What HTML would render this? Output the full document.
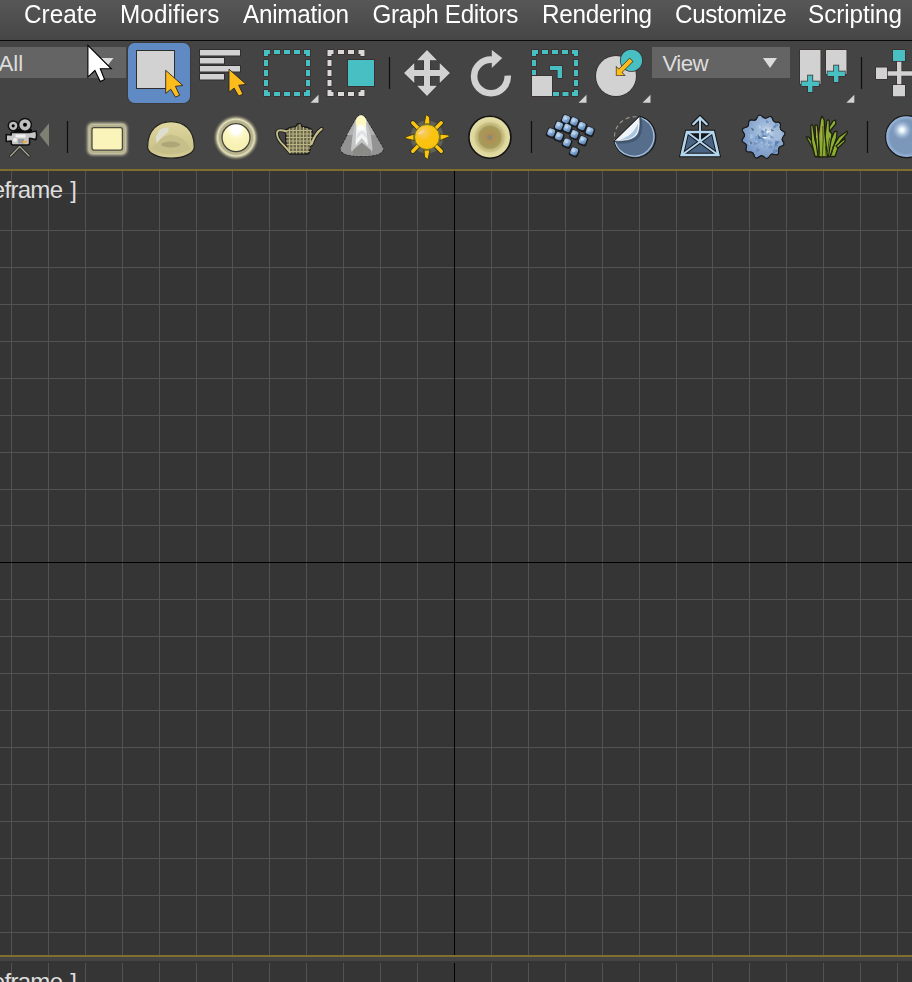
<!DOCTYPE html>
<html>
<head>
<meta charset="utf-8">
<title>Viewport</title>
<style>
html,body{margin:0;padding:0;}
body{width:912px;height:982px;overflow:hidden;background:#444444;position:relative;font-family:"Liberation Sans",sans-serif;}
.abs{position:absolute;}
#menubar{left:0;top:0;width:912px;height:40px;background:linear-gradient(#575757,#464646);}
#menuline{left:0;top:40px;width:912px;height:1px;background:#0a0a0a;}
.mi{position:absolute;top:0;height:40px;line-height:30px;font-size:24.3px;color:#ffffff;white-space:nowrap;transform:scaleY(1.035);transform-origin:0 22.6px;}
.dd{position:absolute;top:47px;height:31px;background:#646464;color:#dcdcdc;font-size:22.3px;line-height:33px;white-space:nowrap;}
.sep{position:absolute;width:2px;background:#1e1e1e;}
.vplabel{position:absolute;font-size:24px;line-height:28px;letter-spacing:-0.7px;color:#dedede;white-space:nowrap;}
svg{position:absolute;left:0;top:0;overflow:visible;}
</style>
</head>
<body>
<!-- MENU BAR -->
<div id="menubar" class="abs">
  <span class="mi" style="left:24px">Create</span>
  <span class="mi" style="left:120px;letter-spacing:0.1px">Modifiers</span>
  <span class="mi" style="left:243px;letter-spacing:-0.25px">Animation</span>
  <span class="mi" style="left:372.5px;letter-spacing:-0.33px">Graph Editors</span>
  <span class="mi" style="left:542px;letter-spacing:-0.25px">Rendering</span>
  <span class="mi" style="left:675px;letter-spacing:-0.37px">Customize</span>
  <span class="mi" style="left:808px;letter-spacing:-0.06px">Scripting</span>
</div>
<div id="menuline" class="abs"></div>

<!-- DROPDOWNS -->
<div class="dd" style="left:0;width:126px;"><span style="position:absolute;left:-1.5px;letter-spacing:0px">All</span></div>
<div class="dd" style="left:652px;width:138px;"><span style="position:absolute;left:10.5px;letter-spacing:-0.6px">View</span></div>

<!-- VIEWPORTS -->
<div class="abs" id="vp1" style="left:0;top:169px;width:912px;height:788px;background:#353535;"></div>
<div class="abs" id="vp2" style="left:0;top:961px;width:912px;height:21px;background:#353535;"></div>

<!-- MAIN SVG LAYER -->
<svg id="main" width="912" height="982" viewBox="0 0 912 982">
<!--GRID-->
<g shape-rendering="crispEdges">
<path fill="#525252" d="M11 171h1v784h-1zM48 171h1v784h-1zM85 171h1v784h-1zM122 171h1v784h-1zM159 171h1v784h-1zM196 171h1v784h-1zM232 171h1v784h-1zM269 171h1v784h-1zM306 171h1v784h-1zM343 171h1v784h-1zM380 171h1v784h-1zM417 171h1v784h-1zM491 171h1v784h-1zM528 171h1v784h-1zM565 171h1v784h-1zM602 171h1v784h-1zM639 171h1v784h-1zM676 171h1v784h-1zM712 171h1v784h-1zM749 171h1v784h-1zM786 171h1v784h-1zM823 171h1v784h-1zM860 171h1v784h-1zM897 171h1v784h-1zM0 193h912v1h-912zM0 230h912v1h-912zM0 267h912v1h-912zM0 304h912v1h-912zM0 341h912v1h-912zM0 378h912v1h-912zM0 415h912v1h-912zM0 452h912v1h-912zM0 489h912v1h-912zM0 525h912v1h-912zM0 599h912v1h-912zM0 636h912v1h-912zM0 673h912v1h-912zM0 710h912v1h-912zM0 747h912v1h-912zM0 784h912v1h-912zM0 821h912v1h-912zM0 858h912v1h-912zM0 895h912v1h-912zM0 932h912v1h-912z"/>
<path fill="#525252" d="M11 963h1v19h-1zM48 963h1v19h-1zM85 963h1v19h-1zM122 963h1v19h-1zM159 963h1v19h-1zM196 963h1v19h-1zM232 963h1v19h-1zM269 963h1v19h-1zM306 963h1v19h-1zM343 963h1v19h-1zM380 963h1v19h-1zM417 963h1v19h-1zM491 963h1v19h-1zM528 963h1v19h-1zM565 963h1v19h-1zM602 963h1v19h-1zM639 963h1v19h-1zM676 963h1v19h-1zM712 963h1v19h-1zM749 963h1v19h-1zM786 963h1v19h-1zM823 963h1v19h-1zM860 963h1v19h-1zM897 963h1v19h-1z"/>
<rect x="454" y="171" width="1" height="784" fill="#000"/>
<rect x="0" y="562" width="912" height="1" fill="#000"/>
<rect x="454" y="963" width="1" height="19" fill="#000"/>
<rect x="0" y="169" width="912" height="2" fill="#826e2c"/>
<rect x="0" y="955" width="912" height="2" fill="#826e2c"/>
</g>
<!--/GRID-->
<!--ICONS-->
<g id="row1">
<!-- selected button -->
<rect x="128" y="43" width="62" height="60" rx="6.500" fill="#5f8ac3" stroke="#3c3a38" stroke-width="1.600" paint-order="stroke"/>
<rect x="136.5" y="50.5" width="38" height="38" fill="#d2d2d2" stroke="#2e2e2e" stroke-width="1"/>
<path id="cur" d="M165.7 70.3 v23.1 l5.1 -4.2 l4.6 7.9 l4.2 -1.8 l-4.2 -9 l7.5 -0.8 z" fill="#fcbc1c" stroke="#2a2622" stroke-width="0.9" stroke-linejoin="miter"/>
<!-- select by name -->
<g fill="#d2d2d2" stroke="#2e2e2e" stroke-width="1">
<rect x="199.5" y="49.5" width="41" height="6.5"/>
<rect x="199.5" y="57.5" width="25" height="6.5"/>
<rect x="199.5" y="65.5" width="41" height="6.5"/>
<rect x="199.5" y="73.5" width="25" height="6.5"/>
</g>
<path d="M229 69.2 v23.1 l5.1 -4.2 l4.6 7.9 l4.2 -1.8 l-4.2 -9 l7.5 -0.8 z" fill="#fcbc1c" stroke="#2a2622" stroke-width="0.9"/>
<!-- rectangular selection region -->
<g fill="#47bfc3" stroke="#3a2e2e" stroke-width="1.5" paint-order="stroke">
<path d="M264 50h6v4h-2v2h-4z M310 50h-6v4h2v2h4z M264 96h6v-4h-2v-2h-4z M310 96h-6v-4h2v-2h4z"/>
<path d="M274 50h6v4h-6z M284 50h6v4h-6z M294 50h6v4h-6z M274 92h6v4h-6z M284 92h6v4h-6z M294 92h6v4h-6z"/>
<path d="M264 60h4v6h-4z M264 70h4v6h-4z M264 80h4v6h-4z M306 60h4v6h-4z M306 70h4v6h-4z M306 80h4v6h-4z"/>
</g>
<path d="M318.5 94.8v8h-8z" fill="#d2d2d2"/>
<!-- window/crossing -->
<g fill="#dadada" stroke="#3a2e2e" stroke-width="1.5" paint-order="stroke">
<path d="M327.5 50h6v4h-2v2h-4z M364.5 50h-6v4h2v2h4z M327.5 96h6v-4h-2v-2h-4z M364.5 96h-6v-4h2v-2h4z"/>
<path d="M338 50h6v4h-6z M348 50h6v4h-6z M338 92h6v4h-6z M348 92h6v4h-6z"/>
<path d="M327.5 60h4v6h-4z M327.5 70h4v6h-4z M327.5 80h4v6h-4z"/>
</g>
<rect x="347.5" y="59.5" width="27" height="27" fill="#47bfc3" stroke="#3a3030" stroke-width="1"/>
<!-- separator -->
<rect x="388.9" y="57" width="1.200" height="32" fill="#0e0e0e"/>
<!-- move -->
<path fill="#d2d2d2" stroke="#353535" stroke-width="1.200" paint-order="stroke" d="M427 50 l10 10.3 h-7 v9.7 h9.700 v-7 l10.300 10 l-10.300 10 v-7 h-9.700 v9.700 h7 l-10 10.300 l-10 -10.300 h7 v-9.700 h-9.700 v7 l-10.300 -10 l10.300 -10 v7 h9.700 v-9.700 h-7 z"/>
<!-- rotate -->
<path fill="none" stroke="#d2d2d2" stroke-width="6.6" d="M492.5 59.700 A16.800 16.800 0 1 0 507.700 75.600"/>
<path fill="#d2d2d2" d="M491.800 50 L502.200 58 L491.800 68z"/>
<!-- scale -->
<g fill="#47bfc3" stroke="#3a2e2e" stroke-width="1.5" paint-order="stroke">
<path d="M532 50h6v4h-2v2h-4z M578 50h-6v4h2v2h4z M578 96h-6v-4h2v-2h4z"/>
<path d="M542 50h6v4h-6z M552 50h6v4h-6z M562 50h6v4h-6z M553 92h6v4h-6z M562.500 92h6v4h-6z"/>
<path d="M532 60h4v6h-4z M532 70h4v5h-4z M574 60h4v6h-4z M574 70h4v6h-4z M574 80h4v6h-4z"/>
<path d="M550 66h12v12h-4.400v-8h-7.600z"/>
</g>
<rect x="532" y="76" width="20" height="20" fill="#d2d2d2" stroke="#3a2e2e" stroke-width="1.5" paint-order="stroke"/>
<path d="M586.500 94.800v8h-8z" fill="#d2d2d2"/>
<!-- place highlight -->
<circle cx="616" cy="76" r="20" fill="#d2d2d2" stroke="#3a2e2e" stroke-width="1.5" paint-order="stroke"/>
<circle cx="631.400" cy="60.400" r="10.700" fill="#47bfc3" stroke="#3a2e2e" stroke-width="1.5" paint-order="stroke"/>
<path d="M629.700 58.600 L632.500 61.500 L621.600 72.400 L624.200 75.100 L616.500 75.200 L616.500 67.300 L618.800 69.600 Z" fill="#fcbc1c" stroke="#2e2a22" stroke-width="1.300" paint-order="stroke" stroke-linejoin="miter"/>
<path d="M650.500 94.800v8h-8z" fill="#d2d2d2"/>
<!-- dropdown arrows -->
<path d="M100 58h13.500l-6.750 8.500z" fill="#dcdcdc"/>
<path d="M763 58h14l-7 10z" fill="#dcdcdc"/>
<!-- pivot -->
<g fill="#d2d2d2" stroke="#3a2e2e" stroke-width="1.5" paint-order="stroke">
<rect x="800" y="50" width="20.500" height="34"/>
<rect x="826" y="50" width="20.500" height="24"/>
</g>
<g fill="#47bfc3" stroke="#3a2e2e" stroke-width="1.5" paint-order="stroke">
<path d="M808 75.600h4.400v6h6.500v4.400h-6.500v6h-4.400v-6h-6.500v-4.400h6.500z"/>
<path d="M834 65.600h4.400v6h6.500v4.400h-6.500v6h-4.400v-6h-6.500v-4.400h6.500z"/>
</g>
<path d="M854.300 94.800v8h-8z" fill="#d2d2d2"/>
<rect x="860.9" y="57" width="1.200" height="32" fill="#0e0e0e"/>
<!-- link -->
<g stroke="#3a2e2e" stroke-width="1.5" paint-order="stroke">
<path fill="#d2d2d2" d="M897 61h4.400v10.300h10.600v4.400h-10.600v9.300h-4.400v-9.300h-10.400v-4.400h10.400z"/>
<rect x="876" y="67.500" width="11" height="11.500" fill="#d2d2d2"/>
<rect x="893" y="85" width="12" height="11.300" fill="#d2d2d2"/>
<rect x="893" y="50" width="12" height="11" fill="#47bfc3"/>
</g>
</g>
<defs>
<filter id="blur3" x="-50%" y="-50%" width="200%" height="200%"><feGaussianBlur stdDeviation="2.2"/></filter>
<filter id="blur2" x="-50%" y="-50%" width="200%" height="200%"><feGaussianBlur stdDeviation="1.7"/></filter>
<filter id="blur1" x="-50%" y="-50%" width="200%" height="200%"><feGaussianBlur stdDeviation="0.7"/></filter>
<radialGradient id="gGlow" cx="0.5" cy="0.5" r="0.5"><stop offset="0.6" stop-color="#b3af88"/><stop offset="0.73" stop-color="#b9b58e"/><stop offset="0.8" stop-color="#e6e3c0"/><stop offset="0.85" stop-color="#c4c19c" stop-opacity="0.85"/><stop offset="0.93" stop-color="#8f8d74" stop-opacity="0.4"/><stop offset="1" stop-color="#6a6958" stop-opacity="0"/></radialGradient>
<radialGradient id="gSphL" cx="0.5" cy="0.2" r="0.6"><stop offset="0" stop-color="#ffffff"/><stop offset="0.25" stop-color="#ffffff"/><stop offset="0.55" stop-color="#fcf7c2"/><stop offset="1" stop-color="#f8f1b4"/></radialGradient>
<radialGradient id="gDisc" cx="0.5" cy="0.5" r="0.5"><stop offset="0" stop-color="#8a8a76"/><stop offset="0.11" stop-color="#8a8a76"/><stop offset="0.14" stop-color="#b48c50"/><stop offset="0.23" stop-color="#b18f52"/><stop offset="0.3" stop-color="#a89558"/><stop offset="0.4" stop-color="#a69859"/><stop offset="0.53" stop-color="#a99c5b"/><stop offset="0.58" stop-color="#c0b679"/><stop offset="0.68" stop-color="#c9c084"/><stop offset="0.75" stop-color="#dcd59b"/><stop offset="0.9" stop-color="#e3dca4"/><stop offset="1" stop-color="#dcd498"/></radialGradient>
<radialGradient id="gBlue" cx="0.5" cy="0.5" r="0.5"><stop offset="0" stop-color="#7a96b8"/><stop offset="0.78" stop-color="#7b97ba"/><stop offset="0.93" stop-color="#94b1d6"/><stop offset="1" stop-color="#a2c0e4"/></radialGradient>
<radialGradient id="gHi" cx="0.5" cy="0.5" r="0.5"><stop offset="0" stop-color="#ffffff"/><stop offset="0.18" stop-color="#ecf8fc"/><stop offset="0.45" stop-color="#bcd0e4" stop-opacity="0.9"/><stop offset="0.75" stop-color="#9ab3d2" stop-opacity="0.5"/><stop offset="1" stop-color="#7b97ba" stop-opacity="0"/></radialGradient>
<linearGradient id="gCube" x1="0" y1="0" x2="1" y2="1"><stop offset="0" stop-color="#b2d0ec"/><stop offset="0.5" stop-color="#8cb1d9"/><stop offset="1" stop-color="#4a73a6"/></linearGradient>
<radialGradient id="gSun" cx="0.35" cy="0.3" r="0.7"><stop offset="0" stop-color="#f6cf70"/><stop offset="0.35" stop-color="#f9c632"/><stop offset="0.5" stop-color="#fbc312"/><stop offset="1" stop-color="#fbc10e"/></radialGradient>
<radialGradient id="gCone" cx="0.5" cy="0.18" r="0.4"><stop offset="0" stop-color="#fffbd0"/><stop offset="0.45" stop-color="#fdf8cc"/><stop offset="1" stop-color="#ffffff" stop-opacity="0"/></radialGradient>
<radialGradient id="gBlob" cx="0.58" cy="0.4" r="0.6"><stop offset="0" stop-color="#dde8f3"/><stop offset="0.3" stop-color="#a3bddc"/><stop offset="1" stop-color="#7898c6"/></radialGradient>
<linearGradient id="gDome" x1="0" y1="0" x2="0" y2="1"><stop offset="0" stop-color="#e0d8a2"/><stop offset="0.5" stop-color="#d2c990"/><stop offset="0.8" stop-color="#cbc38a"/><stop offset="1" stop-color="#d9d09a"/></linearGradient>
</defs>
<g id="row2">
<!-- camera -->
<g>
<path d="M39.5 134.700 L49 123.200 V146.800z" fill="#7f7f73"/>
<path d="M19.700 146.500 L10.500 156 M19.700 146.500 L29 156" stroke="#222" stroke-width="3" fill="none" stroke-linecap="round"/>
<path d="M19.700 146.500 L10.500 156 M19.700 146.500 L29 156" stroke="#a4a494" stroke-width="1.400" fill="none" stroke-linecap="round"/>
<path d="M14 129 H32 V134 H14z" fill="#0c0c0c"/>
<path d="M11.200 132.500 H29.600 L36 131 Q37.500 135.300 36 139.600 L29.600 138.300 V143 Q29.600 145 27.600 145 H13.200 Q11.200 145 11.200 143 V141 L6.200 141.500 V134.500 L11.200 135z" fill="#c6c6c6" stroke="#111" stroke-width="1.600" stroke-linejoin="round"/>
<rect x="15.500" y="134.500" width="10" height="3" fill="#f2f2f2"/>
<rect x="18" y="139" width="6" height="4.500" fill="#9a9a9a"/>
<circle cx="15" cy="140" r="2" fill="#eeeeee"/>
<rect x="23" y="140.800" width="3.600" height="2.400" fill="#f2a93a"/>
<circle cx="13.200" cy="125.800" r="4.900" fill="#bebebe" stroke="#111" stroke-width="1.500"/>
<circle cx="13.200" cy="125.800" r="1.600" fill="#000"/>
<circle cx="25" cy="124.800" r="6.400" fill="#bebebe" stroke="#111" stroke-width="1.500"/>
<circle cx="25" cy="124.800" r="2" fill="#000"/>
</g>
<rect x="66.9" y="121" width="1.200" height="32" fill="#0e0e0e"/>
<!-- rect light -->
<rect x="87.500" y="123" width="39.500" height="32" rx="5" fill="#e2dfbb" opacity="0.950" filter="url(#blur2)"/>
<rect x="89.500" y="125" width="35.500" height="28" rx="3" fill="#b5b18a" filter="url(#blur1)"/>
<rect x="92" y="127.700" width="30.400" height="22.400" rx="2" fill="#faf4ba" stroke="#4a4a46" stroke-width="1.300"/>
<!-- dome -->
<path d="M147.600 147 C147.600 130 158 121.600 171 121.600 C184 121.600 194.300 130 194.300 147 C194.300 153 184 158.200 171 158.200 C158 158.200 147.600 153 147.600 147 Z" fill="url(#gDome)" stroke="#222220" stroke-width="1.200"/>
<path d="M152 148 Q160 136 171 134.500 Q183 136 190.500 148 Q182 154.500 171 154.500 Q160 154.500 152 148z" fill="#c7bf8a" filter="url(#blur1)"/>
<ellipse cx="170.600" cy="144.500" rx="9.500" ry="3" fill="#aea678" filter="url(#blur1)"/>
<path d="M155.800 137 L159.700 130 Q163 127.600 168.300 127.600 L168.500 131.700 Q161 137 156.600 143.800z" fill="#deded0" filter="url(#blur1)"/>
<!-- sphere light -->
<circle cx="236" cy="137.600" r="23" fill="url(#gGlow)"/>
<circle cx="236" cy="137.600" r="14" fill="url(#gSphL)" stroke="#454540" stroke-width="1.300"/>
<!-- teapot -->
<g>
<g fill="none" stroke="#171717" stroke-linecap="round">
<path d="M286.500 131.500 Q276.500 128 277 134 Q277.500 139.500 283.500 145 Q287 148.500 290 152.500" stroke-width="3.600"/>
<path d="M311.500 144 Q315.500 133 321.500 129" stroke-width="4.200"/>
</g>
<path d="M286 131 Q286 127.500 296 126.500 L296.500 125 Q299 122 301.500 125 L302 126.500 Q312 127.500 312.500 132 Q312.500 140 311 145 Q310 151 308.500 154 H290 Q287 150 286 145 Q285.500 138 286 131z" fill="#6a674c" stroke="#1b1b1b" stroke-width="1.500" stroke-linejoin="round"/>
<path d="M289.500 128.500 V153 M293 127.500 V153.500 M296.500 126.500 V153.500 M300 124 V153.500 M303.500 127 V153.500 M307 128 V153 M310.500 129.500 V146 M286.500 130.500 H312 M286 134 H312.500 M286 137.500 H312.500 M286 141 H312 M286.500 144.500 H311.500 M287.500 148 H310.500 M289 151.500 H309.500" stroke="#d2cb93" stroke-width="1.100" fill="none" opacity="0.780"/>
<g fill="none" stroke="#c4bd88" stroke-linecap="round">
<path d="M286.500 131.500 Q276.500 128 277 134 Q277.500 139.500 283.500 145 Q287 148.500 290 152.500" stroke-width="1.900"/>
<path d="M311.500 144 Q315.500 133 321.500 129" stroke-width="2.300"/>
</g>
</g>
<!-- cone light -->
<g>
<path d="M355.800 119.500 Q361 110.500 366.200 119.500 L383.300 148.500 Q383 156 361.800 156 Q340.500 156 340.500 148.500z" fill="#8d8d8d" stroke="#1e1e1e" stroke-width="1.800" stroke-dasharray="1.200 2.600"/>
<path d="M355.800 119.500 Q361 110.500 366.200 119.500 L383.300 148.500 Q383 156 361.800 156 Q340.500 156 340.500 148.500z" fill="#939393"/>
<path d="M355.800 119.500 Q361 110.500 366.200 119.500 L375.400 135 H347z" fill="#b1b1b1"/>
<path d="M355.600 120 Q361 111.500 366.400 120 L371 136 L372.500 149 L371 154.500 Q361 156 352.500 154.500 L351 149 L352.500 136z" fill="#c4c4c4"/>
<path d="M353 150 L361.800 142.500 L370.800 150 L371.500 152 L371 155 Q361 156.500 352.500 155 L352 152z" fill="#8a8a86"/>
<path d="M356.500 122 L365.500 122 L368 145.500 L361.800 138 L355.600 145.500z" fill="#f3f5f5"/>
<path d="M357 134 L361.800 130 L366.600 134 L367.200 139 L361.800 133.500 L356.400 139z" fill="#d9dde0" opacity="0.800"/>
<ellipse cx="361" cy="122" rx="5.200" ry="6.500" fill="#fdf7c0" filter="url(#blur1)"/>
<ellipse cx="361" cy="127.500" rx="3.500" ry="3" fill="#ffffff" opacity="0.700" filter="url(#blur1)"/>
</g>
<!-- sun -->
<g>
<circle cx="427" cy="137" r="16.500" fill="#a8a890" opacity="0.300" filter="url(#blur1)"/>
<g fill="none" stroke-linecap="round">
<path d="M418.200 128.200 L412.800 122.800 M435.800 128.200 L441.200 122.800 M418.200 145.800 L412.800 151.200 M435.800 145.800 L441.200 151.200" stroke="#33321a" stroke-width="5.200"/>
<path d="M418.200 128.200 L412.800 122.800 M435.800 128.200 L441.200 122.800 M418.200 145.800 L412.800 151.200 M435.800 145.800 L441.200 151.200" stroke="#fbc312" stroke-width="3.400"/>
</g>
<g fill="#fbc312" stroke="#3b3a14" stroke-width="0.900" stroke-linejoin="round">
<path d="M424 124 L426 114.500 L429.500 117 L430 124z"/>
<path d="M424 150 L424.500 157 L428 159.500 L430 150z"/>
<path d="M414 134 L405.500 137 L405.500 138.500 L414 140.500z"/>
<path d="M440 134 L448.500 135 L449.500 136.500 L440 140.500z"/>
</g>
<circle cx="427" cy="137" r="12.500" fill="url(#gSun)" stroke="#6d7a1c" stroke-width="1"/>
<path d="M418 133.500 Q421 130 424.500 130.500 Q423 133.500 419 135z" fill="#f6d9a0"/>
</g>
<!-- disc -->
<circle cx="489.900" cy="137.200" r="21" fill="url(#gDisc)" stroke="#141414" stroke-width="1.600"/>
<rect x="530.9" y="121" width="1.200" height="32" fill="#0e0e0e"/>
</g>
<g id="row2b">
<!-- cube array -->
<g filter="url(#blur1)" opacity="0.900">
<rect x="561.6" y="115.0" width="9.400" height="9.600" rx="2.200" fill="#18181a" transform="rotate(22 566 119.2)"/>
<rect x="569.8" y="117.3" width="9.400" height="9.600" rx="2.200" fill="#18181a" transform="rotate(22 574.2 121.5)"/>
<rect x="577.4" y="121.9" width="9.400" height="9.600" rx="2.200" fill="#18181a" transform="rotate(22 581.8 126.1)"/>
<rect x="585.3" y="126.8" width="9.400" height="9.600" rx="2.200" fill="#18181a" transform="rotate(22 589.7 131)"/>
<rect x="554.6" y="121.6" width="9.400" height="9.600" rx="2.200" fill="#18181a" transform="rotate(22 559 125.8)"/>
<rect x="562.9" y="123.8" width="9.400" height="9.600" rx="2.200" fill="#18181a" transform="rotate(22 567.3 128)"/>
<rect x="570.1" y="130.1" width="9.400" height="9.600" rx="2.200" fill="#18181a" transform="rotate(22 574.5 134.3)"/>
<rect x="578.4" y="136.1" width="9.400" height="9.600" rx="2.200" fill="#18181a" transform="rotate(22 582.8 140.3)"/>
<rect x="546.8" y="128.2" width="9.400" height="9.600" rx="2.200" fill="#18181a" transform="rotate(22 551.2 132.4)"/>
<rect x="554.6" y="132.1" width="9.400" height="9.600" rx="2.200" fill="#18181a" transform="rotate(22 559 136.3)"/>
<rect x="562.6" y="138.4" width="9.400" height="9.600" rx="2.200" fill="#18181a" transform="rotate(22 567 142.6)"/>
<rect x="569.8" y="147.2" width="9.400" height="9.600" rx="2.200" fill="#18181a" transform="rotate(22 574.2 151.4)"/>
</g>
<rect x="562.5" y="115.5" width="7" height="7.400" rx="2" fill="url(#gCube)" transform="rotate(22 566 119.2)"/>
<circle cx="565.4" cy="118.2" r="1.700" fill="#c8def2" opacity="0.750"/>
<rect x="570.7" y="117.8" width="7" height="7.400" rx="2" fill="url(#gCube)" transform="rotate(22 574.2 121.5)"/>
<circle cx="573.6" cy="120.5" r="1.700" fill="#c8def2" opacity="0.750"/>
<rect x="578.3" y="122.4" width="7" height="7.400" rx="2" fill="url(#gCube)" transform="rotate(22 581.8 126.1)"/>
<circle cx="581.2" cy="125.1" r="1.700" fill="#c8def2" opacity="0.750"/>
<rect x="586.2" y="127.3" width="7" height="7.400" rx="2" fill="url(#gCube)" transform="rotate(22 589.7 131)"/>
<circle cx="589.1" cy="130.0" r="1.700" fill="#c8def2" opacity="0.750"/>
<rect x="555.5" y="122.1" width="7" height="7.400" rx="2" fill="url(#gCube)" transform="rotate(22 559 125.8)"/>
<circle cx="558.4" cy="124.8" r="1.700" fill="#c8def2" opacity="0.750"/>
<rect x="563.8" y="124.3" width="7" height="7.400" rx="2" fill="url(#gCube)" transform="rotate(22 567.3 128)"/>
<circle cx="566.7" cy="127.0" r="1.700" fill="#c8def2" opacity="0.750"/>
<rect x="571.0" y="130.6" width="7" height="7.400" rx="2" fill="url(#gCube)" transform="rotate(22 574.5 134.3)"/>
<circle cx="573.9" cy="133.3" r="1.700" fill="#c8def2" opacity="0.750"/>
<rect x="579.3" y="136.6" width="7" height="7.400" rx="2" fill="url(#gCube)" transform="rotate(22 582.8 140.3)"/>
<circle cx="582.2" cy="139.3" r="1.700" fill="#c8def2" opacity="0.750"/>
<rect x="547.7" y="128.7" width="7" height="7.400" rx="2" fill="url(#gCube)" transform="rotate(22 551.2 132.4)"/>
<circle cx="550.6" cy="131.4" r="1.700" fill="#c8def2" opacity="0.750"/>
<rect x="555.5" y="132.6" width="7" height="7.400" rx="2" fill="url(#gCube)" transform="rotate(22 559 136.3)"/>
<circle cx="558.4" cy="135.3" r="1.700" fill="#c8def2" opacity="0.750"/>
<rect x="563.5" y="138.9" width="7" height="7.400" rx="2" fill="url(#gCube)" transform="rotate(22 567 142.6)"/>
<circle cx="566.4" cy="141.6" r="1.700" fill="#c8def2" opacity="0.750"/>
<rect x="570.7" y="147.7" width="7" height="7.400" rx="2" fill="url(#gCube)" transform="rotate(22 574.2 151.4)"/>
<circle cx="573.6" cy="150.4" r="1.700" fill="#c8def2" opacity="0.750"/>
<!-- decal -->
<circle cx="634.900" cy="137.200" r="20.500" fill="none" stroke="#96968c" stroke-width="1.100" stroke-dasharray="4.200 3"/>
<path d="M639.500 116.400 A21 21 0 1 1 614.200 141.200 Z" fill="#566e8c" stroke="#161616" stroke-width="1.200"/>
<path d="M640.800 117.700 A19.800 19.800 0 1 1 615.200 142.200" fill="none" stroke="#a9c5e2" stroke-width="1.200"/>
<path d="M640.300 117 C641.500 123 642 131 638.800 135.800 C635.500 141 627 143.200 616 142.200" fill="none" stroke="#3c516c" stroke-width="2.200" opacity="0.750"/>
<path d="M639.500 116.200 C640.200 122 640.500 130 637.500 134.500 C634.500 139.500 626 142 614.200 141 Z" fill="#eef4f8" stroke="#26323f" stroke-width="0.600"/>
<path d="M638 124 C638.500 130 637 133 634.500 135.500 C631 138.800 626 139.800 620 139.800 C628 137 632 133.500 635 129z" fill="#a7c6e0"/>
<path d="M639.500 116.200 L614.200 141" stroke="#1a1a1a" stroke-width="0.900"/>
<!-- tower -->
<path d="M687 132 H713 L718.300 155 H681.700z" fill="#4a6484"/>
<path d="M687 132 H713 L700 141.500z" fill="#15181d"/>
<g fill="none" stroke="#121212" stroke-width="4.400" stroke-linejoin="miter">
<path d="M687 132 H713 L718.300 155 H681.700z"/>
<path d="M687.500 132.500 L717.500 154.500 M712.500 132.500 L682.500 154.500 M700 141.600 V118" stroke-width="4"/>
<path d="M693.300 124.300 L700 117.600 L706.700 124.300" stroke-linecap="round"/>
</g>
<g fill="none" stroke="#b4d5ee" stroke-width="2.600" stroke-linejoin="miter">
<path d="M687 132 H713 L718.300 155 H681.700z"/>
<path d="M687.500 132.500 L717.500 154.500 M712.500 132.500 L682.500 154.500 M700 141.600 V118" stroke-width="2.100"/>
<path d="M693.300 124.300 L700 117.600 L706.700 124.300" stroke-width="2.300" stroke-linecap="round"/>
</g>
<!-- blob -->
<clipPath id="blobclip"><path d="M782.6 131.4 Q786.3 133.0 783.3 135.7 Q780.3 138.5 782.6 141.7 Q784.9 144.8 781.1 145.8 Q777.3 146.8 778.1 151.1 Q778.8 155.4 774.7 153.9 Q770.6 152.4 769.0 155.9 Q767.4 159.4 764.6 156.7 Q761.9 153.9 758.6 156.6 Q755.3 159.3 754.5 155.1 Q753.6 150.9 749.6 151.5 Q745.5 152.0 746.7 148.1 Q748.0 144.2 744.5 142.6 Q741.0 140.9 743.7 138.2 Q746.5 135.5 743.8 132.2 Q741.2 128.9 745.3 128.1 Q749.5 127.2 749.1 123.4 Q748.8 119.6 752.5 120.6 Q756.2 121.6 757.8 117.7 Q759.3 113.8 762.1 117.0 Q764.9 120.1 768.0 117.8 Q771.2 115.6 772.2 119.3 Q773.2 123.1 777.0 122.7 Q780.9 122.4 779.8 126.1 Q778.8 129.8 782.6 131.4Z"/></clipPath>
<path d="M782.6 131.4 Q786.3 133.0 783.3 135.7 Q780.3 138.5 782.6 141.7 Q784.9 144.8 781.1 145.8 Q777.3 146.8 778.1 151.1 Q778.8 155.4 774.7 153.9 Q770.6 152.4 769.0 155.9 Q767.4 159.4 764.6 156.7 Q761.9 153.9 758.6 156.6 Q755.3 159.3 754.5 155.1 Q753.6 150.9 749.6 151.5 Q745.5 152.0 746.7 148.1 Q748.0 144.2 744.5 142.6 Q741.0 140.9 743.7 138.2 Q746.5 135.5 743.8 132.2 Q741.2 128.9 745.3 128.1 Q749.5 127.2 749.1 123.4 Q748.8 119.6 752.5 120.6 Q756.2 121.6 757.8 117.7 Q759.3 113.8 762.1 117.0 Q764.9 120.1 768.0 117.8 Q771.2 115.6 772.2 119.3 Q773.2 123.1 777.0 122.7 Q780.9 122.4 779.8 126.1 Q778.8 129.8 782.6 131.4Z" fill="#7fa4d1" stroke="#1a1a1a" stroke-width="2.200" stroke-linejoin="round"/>
<g clip-path="url(#blobclip)">
<path d="M782.6 131.4 Q786.3 133.0 783.3 135.7 Q780.3 138.5 782.6 141.7 Q784.9 144.8 781.1 145.8 Q777.3 146.8 778.1 151.1 Q778.8 155.4 774.7 153.9 Q770.6 152.4 769.0 155.9 Q767.4 159.4 764.6 156.7 Q761.9 153.9 758.6 156.6 Q755.3 159.3 754.5 155.1 Q753.6 150.9 749.6 151.5 Q745.5 152.0 746.7 148.1 Q748.0 144.2 744.5 142.6 Q741.0 140.9 743.7 138.2 Q746.5 135.5 743.8 132.2 Q741.2 128.9 745.3 128.1 Q749.5 127.2 749.1 123.4 Q748.8 119.6 752.5 120.6 Q756.2 121.6 757.8 117.7 Q759.3 113.8 762.1 117.0 Q764.9 120.1 768.0 117.8 Q771.2 115.6 772.2 119.3 Q773.2 123.1 777.0 122.7 Q780.9 122.4 779.8 126.1 Q778.8 129.8 782.6 131.4Z" fill="url(#gBlob)"/>
<path d="M749.7 145.0 L747.6 146.4 L746.6 143.6z" fill="#5a7eae" opacity="0.600"/>
<path d="M763.2 136.1 L759.2 138.4 L759.7 134.2z" fill="#bcd3ec" opacity="0.600"/>
<path d="M778.4 145.7 L773.7 148.0 L775.2 143.3z" fill="#5a7eae" opacity="0.600"/>
<path d="M766.7 140.8 L761.0 143.3 L761.4 137.5z" fill="#bcd3ec" opacity="0.600"/>
<path d="M772.9 142.7 L767.3 146.1 L768.4 139.8z" fill="#6a90c2" opacity="0.600"/>
<path d="M768.7 130.4 L764.7 132.0 L765.2 128.4z" fill="#4f74a8" opacity="0.600"/>
<path d="M780.0 142.2 L775.2 145.4 L775.5 140.4z" fill="#4f74a8" opacity="0.600"/>
<path d="M767.5 137.6 L761.8 140.7 L762.0 135.1z" fill="#6a90c2" opacity="0.600"/>
<path d="M765.4 140.8 L761.3 142.1 L761.2 138.2z" fill="#93b4dc" opacity="0.600"/>
<path d="M772.9 147.7 L770.8 149.6 L770.8 146.7z" fill="#6a90c2" opacity="0.600"/>
<path d="M762.4 127.8 L757.2 129.2 L758.1 124.5z" fill="#a9c6e6" opacity="0.600"/>
<path d="M757.7 142.7 L754.8 145.5 L753.6 141.8z" fill="#5a7eae" opacity="0.600"/>
<path d="M766.8 138.2 L763.7 140.6 L764.3 136.6z" fill="#a9c6e6" opacity="0.600"/>
<path d="M763.6 137.0 L760.4 139.3 L760.2 135.1z" fill="#4f74a8" opacity="0.600"/>
<path d="M761.4 126.9 L759.2 128.5 L759.3 124.9z" fill="#c9dcf0" opacity="0.600"/>
<path d="M763.9 131.3 L760.3 133.8 L760.7 129.7z" fill="#6a90c2" opacity="0.600"/>
<path d="M769.1 121.9 L766.6 123.2 L766.1 120.3z" fill="#5a7eae" opacity="0.600"/>
<path d="M771.3 138.7 L767.5 139.3 L768.0 136.5z" fill="#c9dcf0" opacity="0.600"/>
<path d="M766.0 141.3 L762.6 143.0 L763.3 139.2z" fill="#a9c6e6" opacity="0.600"/>
<path d="M769.2 121.9 L766.1 123.2 L765.7 119.3z" fill="#6a90c2" opacity="0.600"/>
<path d="M765.1 135.4 L762.4 136.7 L762.6 133.5z" fill="#6a90c2" opacity="0.600"/>
<path d="M745.7 140.6 L742.8 142.0 L743.4 138.9z" fill="#6a90c2" opacity="0.600"/>
<path d="M770.9 136.1 L766.4 139.6 L765.2 133.7z" fill="#a9c6e6" opacity="0.600"/>
<path d="M778.7 151.6 L775.2 152.6 L775.9 149.4z" fill="#4f74a8" opacity="0.600"/>
<path d="M773.1 146.5 L768.7 149.2 L768.2 143.3z" fill="#6a90c2" opacity="0.600"/>
<path d="M779.3 141.6 L775.2 145.0 L774.9 139.8z" fill="#4f74a8" opacity="0.600"/>
<path d="M754.9 136.7 L750.0 139.2 L750.5 133.7z" fill="#bcd3ec" opacity="0.600"/>
<path d="M757.0 136.0 L752.5 138.2 L751.6 131.9z" fill="#93b4dc" opacity="0.600"/>
<path d="M760.2 150.5 L755.9 152.3 L756.9 147.6z" fill="#5a7eae" opacity="0.600"/>
<path d="M778.6 150.3 L772.2 155.1 L773.6 148.7z" fill="#5a7eae" opacity="0.600"/>
<path d="M760.1 116.6 L756.2 119.3 L756.6 114.8z" fill="#7098cc" opacity="0.600"/>
<path d="M773.1 138.8 L769.4 139.8 L768.1 135.5z" fill="#bcd3ec" opacity="0.600"/>
<path d="M769.7 135.3 L764.1 137.8 L765.1 132.0z" fill="#7098cc" opacity="0.600"/>
<path d="M758.7 136.5 L754.9 139.0 L756.0 135.8z" fill="#6a90c2" opacity="0.600"/>
<path d="M767.5 137.2 L762.7 138.2 L762.9 133.7z" fill="#4f74a8" opacity="0.600"/>
<path d="M761.9 117.1 L757.1 121.4 L757.3 115.0z" fill="#93b4dc" opacity="0.600"/>
<path d="M761.8 136.2 L759.3 139.0 L759.4 135.0z" fill="#a9c6e6" opacity="0.600"/>
<path d="M766.6 146.5 L761.4 148.2 L761.8 144.2z" fill="#7098cc" opacity="0.600"/>
<path d="M767.5 140.7 L763.3 144.6 L761.3 137.8z" fill="#6a90c2" opacity="0.600"/>
<path d="M764.9 140.7 L762.7 142.0 L762.2 139.0z" fill="#7098cc" opacity="0.600"/>
<path d="M770.5 144.9 L767.9 146.1 L767.2 143.1z" fill="#c9dcf0" opacity="0.600"/>
<path d="M774.0 137.6 L770.9 138.9 L769.6 134.7z" fill="#5a7eae" opacity="0.600"/>
<path d="M761.4 141.0 L756.5 143.2 L757.5 138.0z" fill="#bcd3ec" opacity="0.600"/>
<path d="M761.8 141.7 L757.2 144.0 L756.9 138.1z" fill="#6a90c2" opacity="0.600"/>
<path d="M752.7 143.5 L748.1 145.4 L749.2 141.3z" fill="#a9c6e6" opacity="0.600"/>
<path d="M768.5 137.5 L765.7 139.8 L765.1 135.8z" fill="#bcd3ec" opacity="0.600"/>
<path d="M764.2 146.0 L761.5 148.1 L761.3 145.3z" fill="#bcd3ec" opacity="0.600"/>
<path d="M766.0 132.4 L761.3 135.2 L761.9 129.8z" fill="#4f74a8" opacity="0.600"/>
<path d="M764.2 136.0 L761.3 137.5 L761.5 134.1z" fill="#93b4dc" opacity="0.600"/>
<path d="M767.4 136.7 L764.5 138.4 L764.0 134.7z" fill="#4f74a8" opacity="0.600"/>
<path d="M773.4 155.3 L768.0 158.7 L769.4 153.5z" fill="#a9c6e6" opacity="0.600"/>
<path d="M781.9 127.2 L779.0 128.8 L779.9 125.8z" fill="#bcd3ec" opacity="0.600"/>
<path d="M776.6 126.8 L773.0 128.9 L773.5 125.4z" fill="#4f74a8" opacity="0.600"/>
<path d="M758.2 141.3 L755.3 142.7 L756.3 139.3z" fill="#c9dcf0" opacity="0.600"/>
<path d="M770.7 134.2 L767.9 135.0 L767.6 131.2z" fill="#7098cc" opacity="0.600"/>
<path d="M766.2 137.5 L761.6 141.0 L761.5 135.1z" fill="#6a90c2" opacity="0.600"/>
<path d="M779.0 124.6 L774.2 128.3 L775.2 122.9z" fill="#5a7eae" opacity="0.600"/>
<path d="M766.7 137.8 L761.9 141.4 L762.0 134.6z" fill="#6a90c2" opacity="0.600"/>
<path d="M761.7 140.1 L758.7 142.0 L758.6 137.5z" fill="#7098cc" opacity="0.600"/>
<path d="M759.8 138.2 L756.1 142.0 L754.3 136.6z" fill="#7098cc" opacity="0.600"/>
<path d="M750.500 127.500 l3.500 1.500 l-1 2.500z M757.500 134 l4 4.500 l-3 0.500z M749.500 141 l3 2 l-2 1.500z M771 128.500 l3.500 2.500 l-3 0.500z" fill="#46607f" opacity="0.850"/>
<path d="M766.500 130 l3.500 1.500 l-2.500 1.500z M762 137 l6 0 l-3.500 2z" fill="#f0f7fb"/>
<path d="M772.500 131 l8 -1 l3 8 l-8 3.500z" fill="#a8bfdc" opacity="0.750"/>
</g>
<!-- grass -->
<g fill="#8eae32" stroke="#1e2210" stroke-width="1.300" stroke-linejoin="round">
<path d="M806.200 137 L808.500 137 L817 147 L821 156.500 L816 156.500 L813 149z"/>
<path d="M847 131.200 L847.600 133 L840 142 L835 156.500 L830 156.500 L834 145 L839 137z"/>
<path d="M844.800 138.500 L845 141.500 L838 148 L836 146z"/>
<path d="M810.700 126 Q811.800 123.800 813 126 L815 140 L820 156.500 L815 156.500 L811.500 142z"/>
<path d="M815 126 Q816.200 123.800 817.400 126 L819 140 L823 156.500 L818 156.500 L816 142z"/>
<path d="M833 121 L835.500 120 L835.800 124 L830 131 L828 129z"/>
<path d="M834.500 131.500 L837 131.500 L836.500 138 L833 148 L830 156.500 L826.500 156.500 L830 142z"/>
<path d="M826.800 121 Q828 118.800 829.200 121 L829.500 131 L832 134 L830 146 L828.500 156.500 L822.500 156.500 L824.500 140z"/>
<path d="M820.500 120 L822 116 L824.200 120 L825 135 L827.500 156.800 L819 156.800 L818.500 135z"/>
</g>

<path d="M821.500 122 L822.500 122 L821.500 140 L820.500 140z M816 128 L817 128 L817 138 L816 138z" fill="#b7a24e"/>
<path d="M822.800 126 L823.200 140 L822.300 156 M829.500 138 L827.500 152 M818.600 140 L819.800 154 M825.500 146 L826 156 M833 146 L831.500 155" stroke="#26300c" stroke-width="0.900" fill="none" opacity="0.850"/>

<!-- sep + sphere -->
<rect x="866.9" y="121" width="1.200" height="32" fill="#0e0e0e"/>
<circle cx="906.500" cy="136.700" r="21" fill="url(#gBlue)" stroke="#1a1a1a" stroke-width="1.300"/>
<circle cx="902" cy="130" r="10.500" fill="url(#gHi)"/>
</g>
<!-- mouse cursor -->
<path d="M87.900 45.300 L87.900 77.100 L94.900 70.500 L100.200 81.500 L104.600 79.500 L100.300 68.800 L111.300 68.800 Z" fill="#ffffff" stroke="#000" stroke-width="1.100" stroke-linejoin="miter"/>
<!--/ICONS-->
</svg>

<div class="vplabel" style="left:-8.2px;top:176px;word-spacing:2px;">eframe ]</div>
<div class="vplabel" style="left:-8.2px;top:968px;word-spacing:2px;">eframe ]</div>
</body>
</html>
